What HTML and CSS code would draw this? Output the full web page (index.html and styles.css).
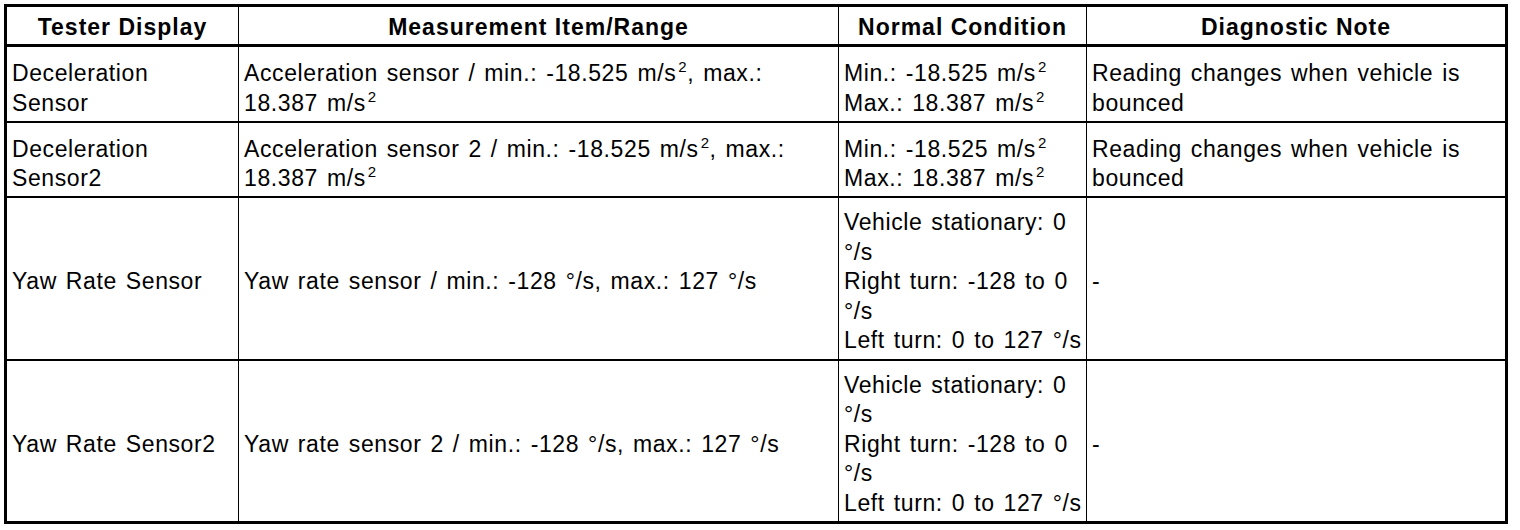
FILE: index.html
```html
<!DOCTYPE html>
<html lang="en">
<head>
    <meta charset="UTF-8">
    <title>Data List</title>
    <link rel="stylesheet" href="styles.css">
</head>
<body>
    <table class="data-list">
        <colgroup>
            <col class="c-display">
            <col class="c-item">
            <col class="c-normal">
            <col class="c-note">
        </colgroup>
        <thead>
            <tr>
                <th>Tester Display</th>
                <th>Measurement Item/Range</th>
                <th>Normal Condition</th>
                <th>Diagnostic Note</th>
            </tr>
        </thead>
        <tbody>
            <tr>
                <td>Deceleration<br>Sensor</td>
                <td>Acceleration sensor / min.: -18.525 m/s<sup>2</sup>, max.:<br>18.387 m/s<sup>2</sup></td>
                <td>Min.: -18.525 m/s<sup>2</sup><br>Max.: 18.387 m/s<sup>2</sup></td>
                <td>Reading changes when vehicle is<br>bounced</td>
            </tr>
            <tr>
                <td>Deceleration<br>Sensor2</td>
                <td>Acceleration sensor 2 / min.: -18.525 m/s<sup>2</sup>, max.:<br>18.387 m/s<sup>2</sup></td>
                <td>Min.: -18.525 m/s<sup>2</sup><br>Max.: 18.387 m/s<sup>2</sup></td>
                <td>Reading changes when vehicle is<br>bounced</td>
            </tr>
            <tr class="mid">
                <td>Yaw Rate Sensor</td>
                <td>Yaw rate sensor / min.: -128 &deg;/s, max.: 127 &deg;/s</td>
                <td>Vehicle stationary: 0<br>&deg;/s<br>Right turn: -128 to 0<br>&deg;/s<br>Left turn: 0 to 127 &deg;/s</td>
                <td>-</td>
            </tr>
            <tr class="mid">
                <td>Yaw Rate Sensor2</td>
                <td>Yaw rate sensor 2 / min.: -128 &deg;/s, max.: 127 &deg;/s</td>
                <td>Vehicle stationary: 0<br>&deg;/s<br>Right turn: -128 to 0<br>&deg;/s<br>Left turn: 0 to 127 &deg;/s</td>
                <td>-</td>
            </tr>
        </tbody>
    </table>
</body>
</html>
```
FILE: styles.css
```css
* {
    margin: 0;
    padding: 0;
}
body {
    background: #fff;
    color: #000;
    font-family: "Liberation Sans", Arial, sans-serif;
    font-size: 23px;
    letter-spacing: 0.6px;
    word-spacing: 2px;
    padding: 4px;
}
.data-list {
    width: 1504px;
    border-collapse: collapse;
    table-layout: fixed;
    border: 3px solid #000;
}
.data-list .c-display {
    width: 233px;
}
.data-list .c-item {
    width: 600px;
}
.data-list .c-normal {
    width: 248px;
}
.data-list th,
.data-list td {
    border-left: 1px solid #000;
    border-right: 1px solid #000;
    border-bottom: 2px solid #000;
    text-align: left;
    vertical-align: top;
    line-height: 29.5px;
    padding: 12px 2px 2.5px 5px;
    white-space: nowrap;
}
.data-list th {
    text-align: center;
    font-weight: bold;
    letter-spacing: 1px;
    word-spacing: 0;
    border-bottom: 3px solid #000;
    line-height: 26px;
    padding: 7px 2px 4px;
}
.data-list .mid td {
    vertical-align: middle;
    padding-top: 10px;
    padding-bottom: 3px;
}
.data-list sup {
    font-size: 15px;
    line-height: 0;
    vertical-align: 9px;
    margin-left: 2px;
}
```
